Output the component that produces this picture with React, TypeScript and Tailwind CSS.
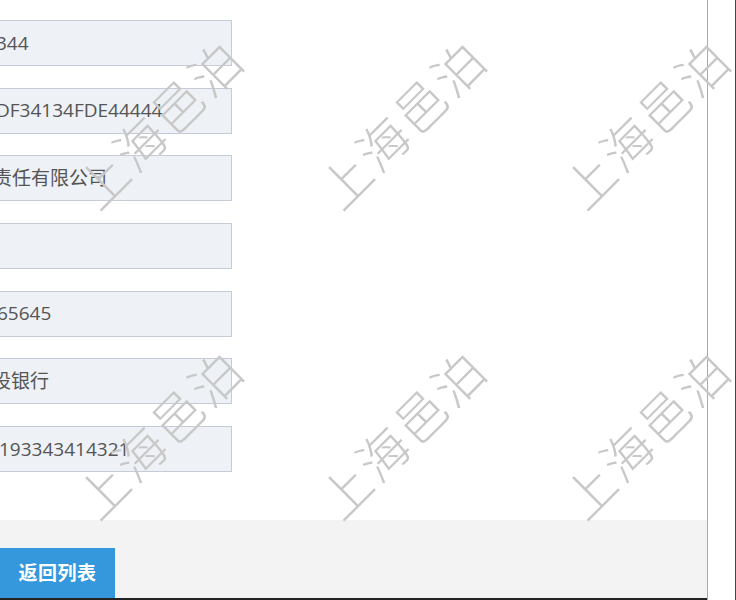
const fields = [
  { text: "344", shift: "-ml-[4px]" },
  { text: "DF34134FDE44444", shift: "-ml-[4px]" },
  { text: "责任有限公司", shift: "-ml-[7px]" },
  { text: "", shift: "" },
  { text: "65645", shift: "-ml-[3px]" },
  { text: "设银行", shift: "-ml-[8px]" },
  { text: "193343414321", shift: "-ml-[1px]" },
];

const marks = [
  "left-[158px] top-[122px]",
  "left-[401px] top-[122px]",
  "left-[645px] top-[122px]",
  "left-[158px] top-[432px]",
  "left-[401px] top-[432px]",
  "left-[645px] top-[432px]",
];

export default function App() {
  return (
    <div className="relative flex w-[736px] h-[600px] overflow-hidden bg-white font-['Open_Sans','Noto_Sans_CJK_SC',sans-serif]">
      <div className="flex flex-col w-[708px] h-full border-r border-[#a9a9a9]">
        <div className="flex flex-col gap-[21.67px] pt-[20px] h-[520px]">
          {fields.map((f, i) => (
            <div
              key={i}
              className="flex items-center w-[232px] h-[46px] overflow-hidden bg-[#eef1f5] border border-l-0 border-[#c5ccd8] text-[19px] text-[#555] whitespace-nowrap"
            >
              <span className={f.shift}>{f.text}</span>
            </div>
          ))}
        </div>
        <div className="flex-1 bg-[#f3f3f3] pt-[28px] border-b-2 border-[#222]">
          <button className="h-[50px] w-[115px] bg-[#3598dc] text-white text-[19px] font-bold tracking-[0.5px]">
            返回列表
          </button>
        </div>
      </div>
      <div className="flex-1 border-r border-[#444]" />

      <div className="absolute inset-0 pointer-events-none">
        {marks.map((m) => (
          <span
            key={m}
            className={`absolute ${m} -translate-x-1/2 -translate-y-1/2 -rotate-45 whitespace-nowrap text-[50px] leading-none tracking-[3px] font-extralight text-[#c8c8c8] font-['Noto_Sans_CJK_SC',sans-serif]`}
          >
            上海邑泊
          </span>
        ))}
      </div>
    </div>
  );
}
